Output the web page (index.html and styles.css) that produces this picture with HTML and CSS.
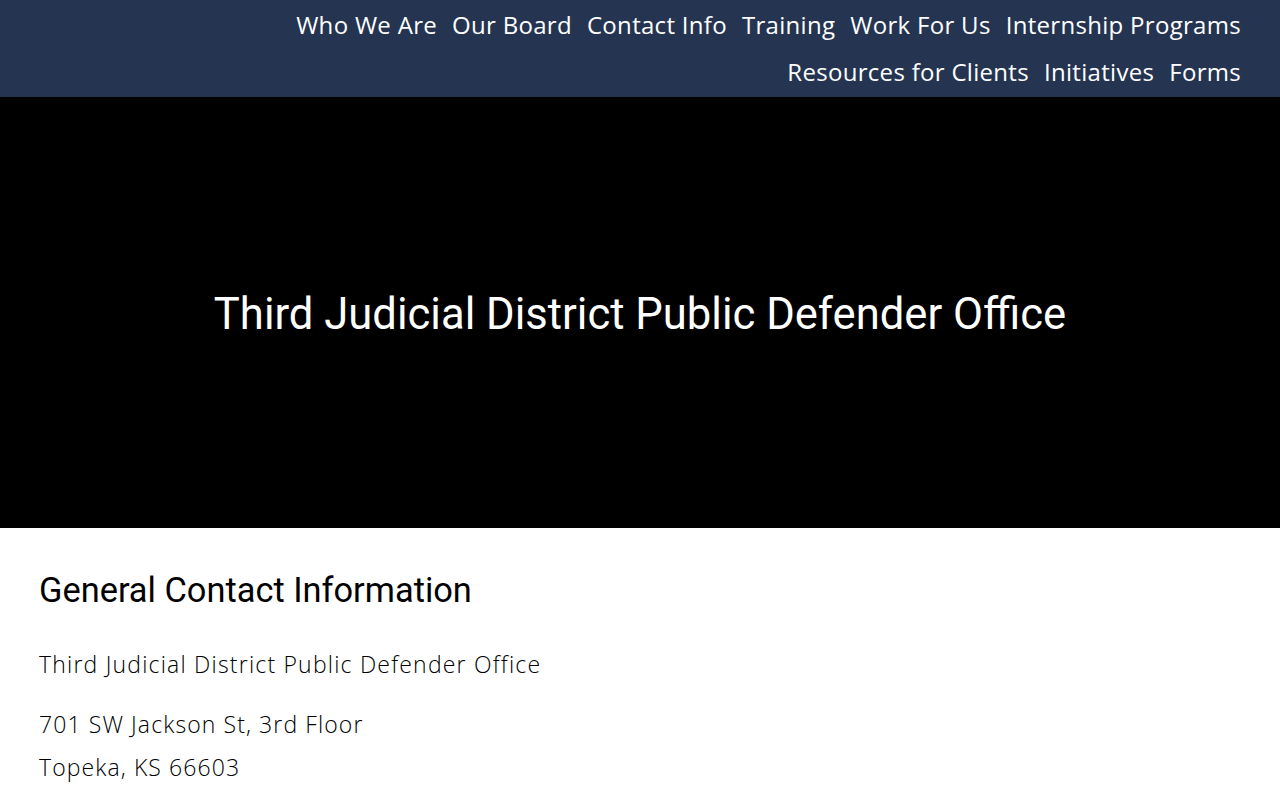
FILE: index.html
```
<!DOCTYPE html>
<html lang="en">
<head>
<meta charset="utf-8">
<title>Third Judicial District Public Defender Office</title>
<link rel="stylesheet" href="styles.css">
</head>
<body>
<header class="topbar">
  <nav class="nav">
    <ul class="nav-row">
      <li><a href="#">Who We Are</a></li>
      <li><a href="#">Our Board</a></li>
      <li><a href="#">Contact Info</a></li>
      <li><a href="#">Training</a></li>
      <li><a href="#">Work For Us</a></li>
      <li><a href="#">Internship Programs</a></li>
    </ul>
    <ul class="nav-row">
      <li><a href="#">Resources for Clients</a></li>
      <li><a href="#">Initiatives</a></li>
      <li><a href="#">Forms</a></li>
    </ul>
  </nav>
</header>
<section class="hero">
  <h1 class="hero-title">Third Judicial District Public Defender Office</h1>
</section>
<main class="content">
  <h2 class="section-title">General Contact Information</h2>
  <p class="office">Third Judicial District Public Defender Office</p>
  <p class="address">701 SW Jackson St, 3rd Floor<br>Topeka, KS 66603</p>
</main>
</body>
</html>
```
FILE: styles.css
```
* { box-sizing: border-box; }
html, body { margin: 0; padding: 0; }
body { font-family: "Open Sans", "Liberation Sans", sans-serif; background: #fff; color: #000; }
.topbar { background: #253551; height: 97px; padding: 0 39px 0 0; }
.nav { display: flex; flex-direction: column; align-items: flex-end; }
.nav-row { list-style: none; margin: 0; padding: 0; display: flex; gap: 15px; height: 47px; align-items: center; }
.nav-row:first-child { height: 48px; }
.nav-row a { color: #fff; text-decoration: none; font-size: 24px; font-weight: 400; letter-spacing: 0.3px; }
.hero { background: #000; height: 431px; display: flex; align-items: center; justify-content: center; padding-top: 4px; }
.hero-title { margin: 0; color: #fff; font-family: Roboto, "Liberation Sans", sans-serif; font-weight: 400; font-size: 43.6px; }
.content { padding: 42px 39px 0; }
.section-title { margin: 0; font-family: Roboto, "Liberation Sans", sans-serif; font-weight: 400; font-size: 34.4px; line-height: 40px; }
.office { margin: 38px 0 0; font-size: 23px; font-weight: 300; line-height: 33px; letter-spacing: 1.2px; }
.address { margin: 22px 0 0; font-size: 23px; font-weight: 300; line-height: 43px; letter-spacing: 1.1px; }
```
